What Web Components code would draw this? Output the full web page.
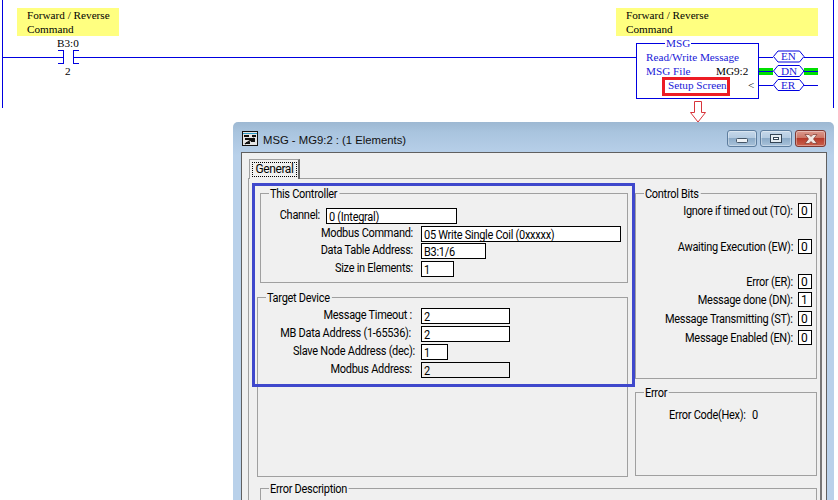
<!DOCTYPE html>
<html>
<head>
<meta charset="utf-8">
<title>MSG setup</title>
<style>
  html, body { margin: 0; background: #fff; }
  body { width: 838px; height: 500px; overflow: hidden; position: relative; }
</style>
</head>
<body>
<ladder-rung></ladder-rung>
<msg-window></msg-window>

<script>
// ladder part: a free canvas, rails and instructions sit at their own place
const rungTpl = document.createElement('template');
rungTpl.innerHTML = `
<style>
  :host { display: block; position: relative; height: 108px; font: 11.2px/14px "Liberation Serif", serif; color: #000; }
  svg { position: absolute; left: 0; top: 0; }
  .note { position: absolute; top: 8px; height: 28px; background: #ffff80; padding-left: 10px; box-sizing: border-box; white-space: nowrap; }
  .t { position: absolute; white-space: nowrap; line-height: 14px; }
  .b { color: #2020d8; }
  .title { background: #fff; padding: 0 1px; }
  .setup { position: absolute; left: 662px; top: 77px; width: 68px; height: 19px; box-sizing: border-box; border: 3px solid #ed1c24; }
  .arrow { left: 689px; top: 100px; z-index: 2; }
</style>
<svg width="838" height="108" shape-rendering="crispEdges">
  <g fill="none" stroke="#0000e0" stroke-width="1">
    <path d="M2.5 0V108M833.500 0V108"/>
    <path d="M2 57.500H63M73 57.500H636"/>
    <path d="M58 50.500H63.500V63.500H58M79 50.500H73.500V63.500H79"/>
  </g>
  <rect x="759" y="68" width="14" height="7" fill="#00e000"/>
  <rect x="804" y="68" width="14" height="7" fill="#00e000"/>
  <g fill="none" stroke="#0000e0" stroke-width="1">
    <path d="M759 57.500H773M804 57.500H833M759 71.500H773M804 71.500H818M759 85.500H773M804 85.500H818"/>
    <rect x="636.500" y="43.500" width="122" height="55" fill="#fff"/>
  </g>
  <g fill="#fff" stroke="#0000e0" stroke-width="1" shape-rendering="auto">
    <path d="M773.500 56.500L778 51H799.500L804 56.500L799.500 62H778Z"/>
    <path d="M773.500 71L778 65.500H799.500L804 71L799.500 76.500H778Z"/>
    <path d="M773.500 85L778 79.500H799.500L804 85L799.500 90.500H778Z"/>
  </g>
</svg>
<div class="note" style="left:17px;width:102px">Forward / Reverse<br>Command</div>
<div class="note" style="left:616px;width:202px">Forward / Reverse<br>Command</div>
<span class="t" style="left:57px;top:36px">B3:0</span>
<span class="t" style="left:65px;top:64px">2</span>
<span class="t b title" style="left:665px;top:36px">MSG</span>
<span class="t b" style="left:646px;top:50px">Read/Write Message</span>
<span class="t b" style="left:646px;top:64px">MSG File</span>
<span class="t" style="left:716px;top:64px">MG9:2</span>
<span class="t b" style="left:668px;top:78px">Setup Screen</span>
<span class="t" style="left:748px;top:78px">&lt;</span>
<span class="t b" style="left:781px;top:49px">EN</span>
<span class="t b" style="left:781px;top:64px">DN</span>
<span class="t b" style="left:781px;top:78px">ER</span>
<div class="setup"></div>
<svg class="arrow" width="18" height="24" shape-rendering="auto">
  <path d="M5.500 1.500H12.500V12.500H16.500L9 22L1.500 12.500H5.500Z" fill="#fff" stroke="#d8343a" stroke-width="1"/>
</svg>
`;
class LadderRung extends HTMLElement {
  constructor() {
    super();
    this.attachShadow({ mode: 'open' }).appendChild(rungTpl.content.cloneNode(true));
  }
}
customElements.define('ladder-rung', LadderRung);

// titled frame with the line broken by its caption
const boxTpl = document.createElement('template');
boxTpl.innerHTML = `
<style>
  :host { display: block; position: relative; box-sizing: border-box; border: 1px solid #a0a0a0; }
  .cap { position: absolute; left: 8px; top: -7px; background: #f0f0f0; padding: 0 2px 0 1px; line-height: 14px; white-space: nowrap; transform: scaleX(.915); transform-origin: left; }
</style>
<span class="cap"></span>
<slot></slot>
`;
class GroupBox extends HTMLElement {
  constructor() {
    super();
    this.attachShadow({ mode: 'open' }).appendChild(boxTpl.content.cloneNode(true));
    this.shadowRoot.querySelector('.cap').textContent = this.getAttribute('label');
  }
}
customElements.define('group-box', GroupBox);

// label + boxed value, label is right aligned up to the box
const rowTpl = document.createElement('template');
rowTpl.innerHTML = `
<style>
  :host { display: flex; align-items: center; height: 18px; white-space: nowrap; }
  .l { display: block; text-align: right; flex: none; padding-bottom: 2px; transform: scaleX(.915); transform-origin: right; }
  .v { flex: none; box-sizing: border-box; height: 16px; border: 1px solid #000; background: #fff; padding: 1px 0 0 2px; line-height: 15px; overflow: hidden; }
  .v span { display: inline-block; transform: scaleX(.915); transform-origin: left; }
  :host([ro]) .v { background: #f0f0f0; }
</style>
<span class="l"></span><span class="v"><span></span></span>
`;
class FieldRow extends HTMLElement {
  constructor() {
    super();
    const root = this.attachShadow({ mode: 'open' });
    root.appendChild(rowTpl.content.cloneNode(true));
    const l = root.querySelector('.l'), v = root.querySelector('.v');
    l.textContent = this.getAttribute('label');
    l.style.width = this.getAttribute('lw') + 'px';
    l.style.marginRight = this.getAttribute('gap') + 'px';
    v.firstElementChild.textContent = this.getAttribute('value');
    v.style.width = this.getAttribute('w') + 'px';
  }
}
customElements.define('field-row', FieldRow);

const winTpl = document.createElement('template');
winTpl.innerHTML = `
<style>
  :host { display: block; position: absolute; left: 233px; top: 122px; width: 601px; height: 378px; box-sizing: border-box; overflow: hidden;
    background: linear-gradient(#9db8d2 0, #a9c4de 10px, #b9d1ea 34px);
    border-radius: 5px 5px 0 0; padding: 0 7px 0 8px;
    font: 12px Roboto, "Liberation Sans", Arial, sans-serif; letter-spacing: -.3px; color: #000; }
  .title { display: flex; align-items: flex-start; height: 30px; letter-spacing: 0; }
  .title > svg { margin: 9px 4px 0 1px; flex: none; }
  .title span { flex: 1; font: 11.3px/16px "Liberation Sans", Arial, sans-serif; color: #111; padding-top: 10px; }
  .btns { display: flex; gap: 3px; margin: 8px 1px 0 0; }
  .btn { width: 30px; height: 17px; box-sizing: border-box; border: 1px solid #5d7d9e; border-radius: 3px;
    background: linear-gradient(#c6d8ea 0, #b4cbe1 45%, #8cabc8 50%, #a8c2da 100%); display: flex; align-items: center; justify-content: center; box-shadow: inset 0 0 0 1px rgba(255,255,255,.35); }
  .btn svg { display: block; }
  .btn.m { width: 32px; }
  .btn.x { width: 31px; border-color: #7e3a34; background: linear-gradient(#dc9a8e 0, #cc7767 45%, #b63c2c 50%, #c9604c 100%); }
  .client { box-sizing: border-box; height: 348px; background: #f0f0f0; border: 1px solid #606060; border-bottom: 0; padding: 6px 4px 0 6px; }
  .tab { display: block; margin: 0 0 -1px 1px; box-sizing: border-box; width: 51px; height: 20px; border: 1px solid #a0a0a0; border-right: 2px solid #666; border-bottom: 0; background: #f0f0f0; padding: 2px 1px 2px 2px; position: relative; z-index: 1; }
  .tab b { display: block; font-weight: normal; letter-spacing: -.4px; outline: 1px dotted #000; outline-offset: -1px; text-align: center; line-height: 15px; height: 15px; }
  .panel { position: relative; box-sizing: border-box; height: 322px; border: 1px solid #a0a0a0; border-right: 2px solid #777; border-bottom: 0; padding: 14px 3px 0 8px; display: grid; grid-template-columns: 371px 182px; column-gap: 7px; align-content: start; }
  .hl { position: absolute; left: 3px; top: 4px; width: 383px; height: 204px; box-sizing: border-box; border: 3px solid #3f48cc; }
  .tc { height: 90px; margin-left: 3px; padding-top: 13px; }
  .td { height: 180px; margin-top: 14px; padding-top: 9px; }
  .bits { height: 186px; padding: 9px 4px 0 0; }
  .err { height: 84px; margin-top: 13px; padding: 15px 0 0 33px; line-height: 14px; white-space: nowrap; }
  .err span { display: inline-block; transform: scaleX(.915); transform-origin: left; }
  .err em { font-style: normal; margin-left: 7px; }
  .desc { grid-column: 1 / 3; margin: 11px 0 0 3px; height: 12px; width: 557px; border-bottom: 0; }
  .bit { display: flex; justify-content: flex-end; align-items: center; gap: 5px; height: 15px; white-space: nowrap; }
  .bit span { transform: scaleX(.915); transform-origin: right; }
  .bit i { font-style: normal; box-sizing: border-box; width: 14px; height: 15px; border: 1px solid #000; background: #fff; padding-left: 2px; line-height: 14px; }
</style>
<div class="title">
  <svg width="17" height="16" viewBox="0 0 17 16" shape-rendering="crispEdges">
    <rect x=".5" y=".5" width="15" height="14" fill="#e4e4e4" stroke="#111"/>
    <rect x="1" y="2" width="14" height="1" fill="#2a9bc8"/>
    <path d="M2 5H7M10 5H14M3 8H13M9 10H13M4 12H8" stroke="#111" stroke-width="1.500" fill="none"/>
    <path d="M3 13L12 7" stroke="#111" stroke-width="1.500" fill="none" shape-rendering="auto"/>
  </svg>
  <span>MSG - MG9:2 : (1 Elements)</span>
  <div class="btns">
    <div class="btn" style="align-items:flex-end;padding-bottom:3px"><svg width="12" height="5"><rect x=".5" y=".5" width="11" height="4" rx="1" fill="#eef2f6" stroke="#456"/></svg></div>
    <div class="btn m"><svg width="12" height="9"><rect x=".5" y=".5" width="11" height="8" fill="#e4ecf2" stroke="#345"/><rect x="3.500" y="3.500" width="5" height="2" fill="#fff" stroke="#345"/></svg></div>
    <div class="btn x"><svg width="14" height="10"><path d="M1 .5H5L7 2.500L9 .5H13L9.500 5L13 9.500H9L7 7.500L5 9.500H1L4.500 5Z" fill="#f1e8e4" stroke="#7a3a30" stroke-width=".7"/></svg></div>
  </div>
</div>
<div class="client">
  <div class="tab"><b>General</b></div>
  <div class="panel">
    <div>
      <group-box class="tc" label="This Controller">
        <field-row label="Channel:" value="0 (Integral)" lw="59" gap="6" w="131"></field-row>
        <field-row label="Modbus Command:" value="05 Write Single Coil (0xxxxx)" lw="152" gap="8" w="200"></field-row>
        <field-row label="Data Table Address:" value="B3:1/6" lw="152" gap="8" w="65" style="margin-top:-1px"></field-row>
        <field-row label="Size in Elements:" value="1" lw="152" gap="8" w="33"></field-row>
      </group-box>
      <group-box class="td" label="Target Device">
        <field-row label="Message Timeout :" value="2" lw="154" gap="9" w="89"></field-row>
        <field-row label="MB Data Address (1-65536):" value="2" lw="153" gap="10" w="89"></field-row>
        <field-row label="Slave Node Address (dec):" value="1" lw="157" gap="6" w="27"></field-row>
        <field-row ro label="Modbus Address:" value="2" lw="154" gap="9" w="89"></field-row>
      </group-box>
    </div>
    <div>
      <group-box class="bits" label="Control Bits">
        <div class="bit"><span>Ignore if timed out (TO):</span><i>0</i></div>
        <div class="bit" style="margin-top:21px"><span>Awaiting Execution (EW):</span><i>0</i></div>
        <div class="bit" style="margin-top:20px"><span>Error (ER):</span><i>0</i></div>
        <div class="bit" style="margin-top:3px"><span>Message done (DN):</span><i>1</i></div>
        <div class="bit" style="margin-top:4px"><span>Message Transmitting (ST):</span><i>0</i></div>
        <div class="bit" style="margin-top:4px"><span>Message Enabled (EN):</span><i>0</i></div>
      </group-box>
      <group-box class="err" label="Error"><span>Error Code(Hex):<em>0</em></span></group-box>
    </div>
    <group-box class="desc" label="Error Description"></group-box>
    <div class="hl"></div>
  </div>
</div>
`;
class MsgWindow extends HTMLElement {
  constructor() {
    super();
    this.attachShadow({ mode: 'open' }).appendChild(winTpl.content.cloneNode(true));
  }
}
customElements.define('msg-window', MsgWindow);
</script>
</body>
</html>
